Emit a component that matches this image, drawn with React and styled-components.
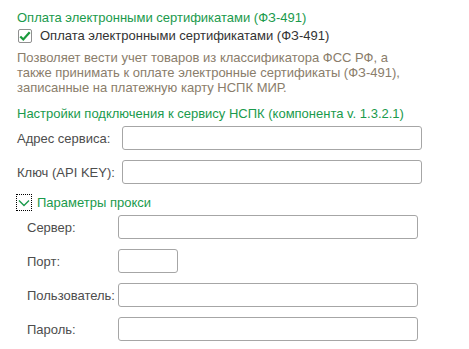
import React from 'react';
import styled, { createGlobalStyle } from 'styled-components';

const GlobalStyle = createGlobalStyle`
  body {
    margin: 0;
    background: #fff;
    font-family: Arial, "Liberation Sans", sans-serif;
    font-size: 13px;
  }
`;

const Form = styled.div`
  width: 469px;
  height: 349px;
  box-sizing: border-box;
  padding: 10px 0 0 17px;
  overflow: hidden;
`;

const GroupTitle = styled.div`
  color: #1a9a4c;
  line-height: 16px;
`;

const CheckRow = styled.label`
  display: flex;
  align-items: center;
  gap: 8px;
  height: 18px;
  margin-top: 1px;
  color: #333;
  line-height: 16px;
`;

const CheckBox = styled.span`
  display: inline-flex;
  align-items: center;
  justify-content: center;
  width: 12px;
  height: 12px;
  border: 1px solid #8f8f8f;
  border-radius: 2px;
  background: #fff;
  margin-left: 1px;
`;

const Note = styled.div`
  color: #8a7d6b;
  line-height: 15px;
  margin: 5px 0 11px;
  white-space: nowrap;
`;

const Fields = styled.div`
  display: flex;
  flex-direction: column;
  gap: 10px;
  margin-top: ${p => p.$top || 0}px;
  padding-left: ${p => p.$indent || 0}px;
`;

const FieldRow = styled.div`
  display: grid;
  grid-template-columns: ${p => p.$labelWidth}px auto;
  align-items: center;
  height: 24px;
`;

const FieldLabel = styled.span`
  color: #4d4d4d;
  white-space: nowrap;
`;

const Input = styled.div`
  box-sizing: border-box;
  width: ${p => p.$width || 300}px;
  height: 24px;
  border: 1px solid #a6a6a6;
  border-radius: 3px;
  background: #fff;
`;

const Toggle = styled.div`
  display: flex;
  align-items: center;
  gap: 5px;
  margin-top: 10px;
  color: #1a9a4c;
  line-height: 16px;
`;

const ToggleBox = styled.span`
  display: inline-flex;
  align-items: center;
  justify-content: center;
  box-sizing: border-box;
  width: 16px;
  height: 17px;
  border: 1px dotted #000;
  margin-left: -1px;
`;

const Check = () => (
  <svg width="14" height="12" viewBox="0 0 14 12">
    <path d="M1.5 6.5 L5 10 L12.5 1.5" fill="none" stroke="#1a9a3c" strokeWidth="2.6" />
  </svg>
);

const Chevron = () => (
  <svg width="12" height="8" viewBox="0 0 12 8">
    <path d="M1 1.5 L6 6.5 L11 1.5" fill="none" stroke="#1a9a4c" strokeWidth="1.4" />
  </svg>
);

const noteLines = [
  'Позволяет вести учет товаров из классификатора ФСС РФ, а',
  'также принимать к оплате электронные сертификаты (ФЗ-491),',
  'записанные на платежную карту НСПК МИР.',
];

const proxyFields = [
  { label: 'Сервер:', width: 300 },
  { label: 'Порт:', width: 60 },
  { label: 'Пользователь:', width: 300 },
  { label: 'Пароль:', width: 300 },
];

export default function App() {
  return (
    <>
      <GlobalStyle />
      <Form>
        <GroupTitle>Оплата электронными сертификатами (ФЗ-491)</GroupTitle>
        <CheckRow>
          <CheckBox><Check /></CheckBox>
          Оплата электронными сертификатами (ФЗ-491)
        </CheckRow>
        <Note>
          {noteLines.map((line, i) => (
            <div key={i}>{line}</div>
          ))}
        </Note>
        <GroupTitle>Настройки подключения к сервису НСПК (компонента v. 1.3.2.1)</GroupTitle>
        <Fields $top={4}>
          <FieldRow $labelWidth={105}>
            <FieldLabel>Адрес сервиса:</FieldLabel>
            <Input />
          </FieldRow>
          <FieldRow $labelWidth={105}>
            <FieldLabel>Ключ (API KEY):</FieldLabel>
            <Input />
          </FieldRow>
        </Fields>
        <Toggle>
          <ToggleBox><Chevron /></ToggleBox>
          Параметры прокси
        </Toggle>
        <Fields $top={4} $indent={10}>
          {proxyFields.map(f => (
            <FieldRow key={f.label} $labelWidth={91}>
              <FieldLabel>{f.label}</FieldLabel>
              <Input $width={f.width} />
            </FieldRow>
          ))}
        </Fields>
      </Form>
    </>
  );
}
